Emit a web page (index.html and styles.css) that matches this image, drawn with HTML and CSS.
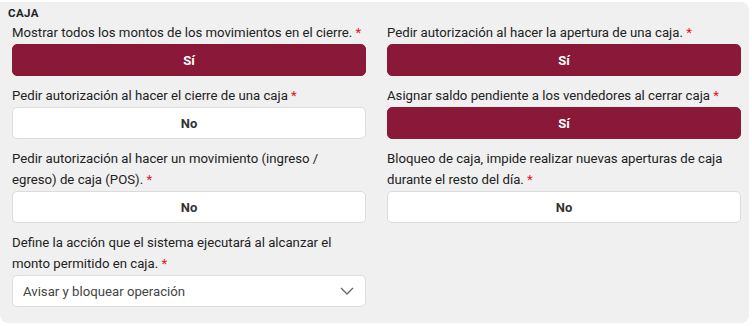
FILE: index.html
```html
<!DOCTYPE html>
<html lang="es">

<head>
    <meta charset="UTF-8">
    <meta name="viewport" content="width=device-width, initial-scale=1.0">
    <title>Caja</title>
    <link rel="stylesheet" href="styles.css">
</head>

<body>
    <div class="panel">
        <div class="title">CAJA</div>
        <div class="grid">
            <div class="field">
                <label class="req">Mostrar todos los montos de los movimientos en el cierre.</label>
                <button class="toggle on">Sí</button>
            </div>
            <div class="field">
                <label class="req">Pedir autorización al hacer la apertura de una caja.</label>
                <button class="toggle on">Sí</button>
            </div>
            <div class="field">
                <label class="req">Pedir autorización al hacer el cierre de una caja</label>
                <button class="toggle">No</button>
            </div>
            <div class="field">
                <label class="req">Asignar saldo pendiente a los vendedores al cerrar caja</label>
                <button class="toggle on">Sí</button>
            </div>
            <div class="field">
                <label class="req">Pedir autorización al hacer un movimiento (ingreso / egreso) de caja (POS).</label>
                <button class="toggle">No</button>
            </div>
            <div class="field">
                <label class="req">Bloqueo de caja, impide realizar nuevas aperturas de caja durante el resto del día.</label>
                <button class="toggle">No</button>
            </div>
            <div class="field">
                <label class="req">Define la acción que el sistema ejecutará al alcanzar el monto permitido en caja.</label>
                <div class="select">
                    <span>Avisar y bloquear operación</span>
                    <svg width="14" height="8" viewBox="0 0 14 8">
                        <polyline points="1,1 7,7 13,1" fill="none" stroke="#666" stroke-width="1.3" />
                    </svg>
                </div>
            </div>
        </div>
    </div>
</body>

</html>
```

FILE: styles.css
```css
body {
    margin: 0;
    background-color: #fff;
    font-family: Roboto, "Noto Sans", sans-serif;
    color: #222;
}

.panel {
    width: 749px;
    height: 321px;
    box-sizing: border-box;
    margin-top: 2px;
    padding: 2px 8px 0 8px;
    background-color: #f0f0f0;
    border-radius: 0 8px 8px 8px;
}

.title {
    font-size: 11.5px;
    font-weight: 700;
    letter-spacing: 0.4px;
    line-height: 18px;
    color: #222;
}

.grid {
    display: grid;
    grid-template-columns: 1fr 1fr;
    column-gap: 21px;
    row-gap: 9px;
    padding-left: 4px;
}

.field {
    display: flex;
    flex-direction: column;
    gap: 1px;
}

.field label {
    font-size: 13.2px;
    line-height: 21px;
}

.field label.req::after {
    content: " *";
    color: #e8101e;
}

.toggle {
    height: 32px;
    border: 1px solid #dcdcdc;
    border-radius: 5px;
    background-color: #fff;
    font-family: inherit;
    font-size: 13px;
    font-weight: 700;
    color: #333;
    cursor: pointer;
}

.toggle.on {
    background-color: #8a1838;
    border-color: #8a1838;
    color: #fff;
}

.select {
    height: 32px;
    box-sizing: border-box;
    border: 1px solid #dcdcdc;
    border-radius: 5px;
    background-color: #fff;
    display: flex;
    align-items: center;
    justify-content: space-between;
    padding: 0 11px 0 10px;
    font-size: 13.2px;
    color: #444;
}
```
